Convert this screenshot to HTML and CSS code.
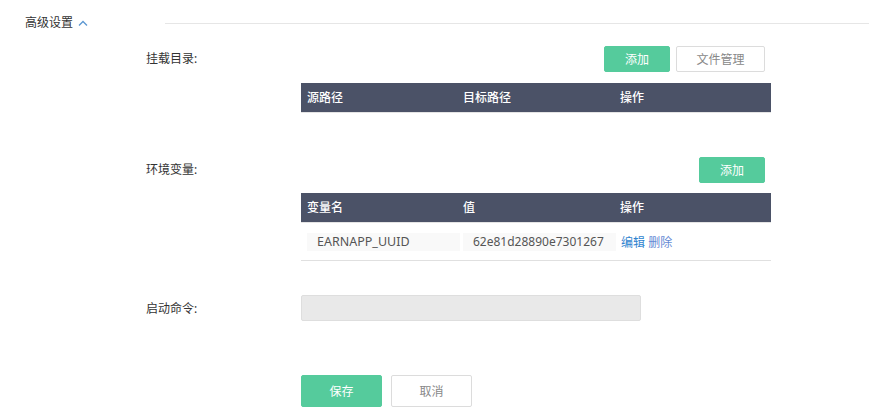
FILE: index.html
```html
<!DOCTYPE html>
<html lang="zh">
<head>
<meta charset="utf-8">
<link rel="stylesheet" href="styles.css">
</head>
<body>
<div class="section-head">
  <div class="section-title">高级设置
    <svg class="chev" width="10" height="6" viewBox="0 0 10 6"><path d="M1 5.5 L5 1.5 L9 5.5" fill="none" stroke="#5b97d2" stroke-width="1.3"/></svg>
  </div>
  <div class="section-line"></div>
</div>

<div class="form">
  <div class="row row-mount">
    <div class="label">挂载目录:</div>
    <div class="content">
      <div class="actions">
        <button class="btn btn-green">添加</button>
        <button class="btn btn-white">文件管理</button>
      </div>
      <div class="thead">
        <div>源路径</div><div>目标路径</div><div>操作</div>
      </div>
    </div>
  </div>

  <div class="row row-env">
    <div class="label">环境变量:</div>
    <div class="content">
      <div class="actions">
        <button class="btn btn-green">添加</button>
      </div>
      <div class="thead">
        <div>变量名</div><div>值</div><div>操作</div>
      </div>
      <div class="trow">
        <div><span class="cell">EARNAPP_UUID</span></div>
        <div><span class="cell cell-val">62e81d28890e7301267</span></div>
        <div class="ops"><a class="edit">编辑</a> <a class="del">删除</a></div>
      </div>
    </div>
  </div>

  <div class="row row-cmd">
    <div class="label">启动命令:</div>
    <div class="content">
      <div class="input"></div>
    </div>
  </div>

  <div class="row row-submit">
    <div class="label"></div>
    <div class="content submit">
      <button class="btn btn-green btn-lg">保存</button>
      <button class="btn btn-white btn-lg">取消</button>
    </div>
  </div>
</div>
</body>
</html>
```

FILE: styles.css
```css
* { box-sizing: border-box; }
html, body { margin: 0; padding: 0; background: #fff; }
body {
  font-family: "Noto Sans", "Noto Sans CJK SC", sans-serif;
  font-size: 12px;
  color: #333;
  width: 869px;
  height: 413px;
  overflow: hidden;
}

.section-head {
  display: flex;
  align-items: center;
  height: 46px;
}
.section-title {
  width: 165px;
  padding-left: 25px;
  display: flex;
  align-items: center;
  color: #333;
  line-height: 16px;
}
.chev { margin-left: 5px; margin-top: -1px; }
.section-line {
  flex: 1;
  border-top: 1px solid #e6e6e6;
}

.form { padding-left: 146px; }
.row { display: flex; }
.label {
  width: 155px;
  flex: none;
  height: 26px;
  line-height: 26px;
  color: #333;
}
.content { width: 470px; }

.actions {
  display: flex;
  justify-content: flex-end;
  gap: 6px;
  padding-right: 6px;
  margin-bottom: 11px;
}
.btn {
  font-family: inherit;
  font-size: 12px;
  height: 26px;
  border-radius: 2px;
  padding: 0;
  cursor: pointer;
}
.btn-green {
  background: #55cb9c;
  border: 1px solid #55cb9c;
  color: #fff;
  width: 66px;
}
.btn-white {
  background: #fff;
  border: 1px solid #dcdcdc;
  color: #888;
  width: 89px;
}

.thead {
  display: grid;
  grid-template-columns: 156px 157px 157px;
  height: 30px;
  background: #4b5267;
  color: #fff;
  line-height: 30px;
  font-weight: 500;
  border-bottom: 1px solid #e4e4e4;
}
.thead > div { padding-left: 6px; }

.row-env { margin-top: 44px; }
.row-env .actions { margin-bottom: 10px; }
.trow {
  display: grid;
  grid-template-columns: 156px 157px 157px;
  height: 38px;
  align-items: center;
  border-bottom: 1px solid #e0e0e0;
  padding-top: 1px;
}
.trow > div { padding-left: 6px; }
.cell {
  display: block;
  width: 153px;
  height: 18px;
  line-height: 18px;
  background: #f9f9f9;
  color: #555;
  padding-left: 10px;
  white-space: nowrap;
  overflow: hidden;
  font-size: 12.5px;
}
.cell-val { font-size: 12px; }
.ops { padding-left: 7px !important; }
.edit { color: #2f84cf; }
.del { color: #6589d4; }

.row-cmd { margin-top: 34px; }
.row-cmd .label { line-height: 28px; }
.input {
  width: 340px;
  height: 26px;
  background: #e9e9e9;
  border: 1px solid #dedede;
  border-radius: 2px;
}

.row-submit { margin-top: 54px; }
.submit { display: flex; gap: 9px; }
.btn-lg { width: 81px; height: 32px; }
.btn-lg.btn-white { width: 81px; }
```
